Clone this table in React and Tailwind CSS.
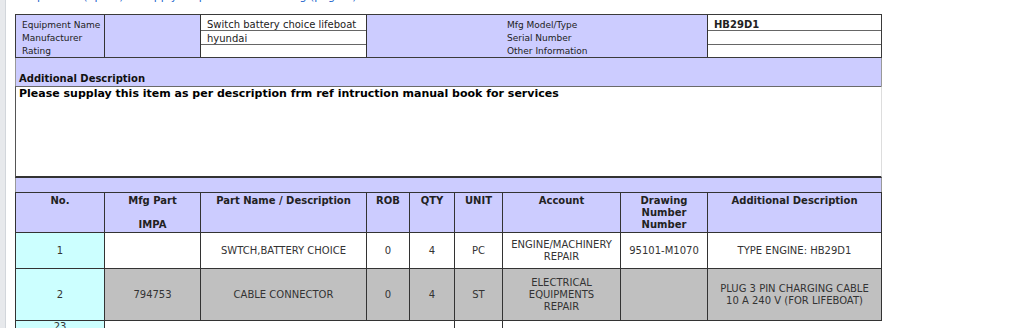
import React from 'react';

const LAV = 'bg-[#ccccff]';

const ITEMS = [
  {
    no: '1',
    impa: '',
    name: 'SWTCH,BATTERY CHOICE',
    rob: '0',
    qty: '4',
    unit: 'PC',
    account: ['ENGINE/MACHINERY', 'REPAIR'],
    drawing: '95101-M1070',
    desc: ['TYPE ENGINE: HB29D1'],
    h: 'h-[36px]',
    bg: 'bg-white',
  },
  {
    no: '2',
    impa: '794753',
    name: 'CABLE CONNECTOR',
    rob: '0',
    qty: '4',
    unit: 'ST',
    account: ['ELECTRICAL', 'EQUIPMENTS', 'REPAIR'],
    drawing: '',
    desc: ['PLUG 3 PIN CHARGING CABLE', '10 A 240 V (FOR LIFEBOAT)'],
    h: 'h-[52px]',
    bg: 'bg-[#c0c0c0]',
  },
];

const Lines = ({ lines }) =>
  lines.map((l, i) => (
    <React.Fragment key={i}>
      {i > 0 && <br />}
      {l}
    </React.Fragment>
  ));

const Cell = ({ children, className = '' }) => (
  <div className={`flex items-center justify-center border-r border-b border-[#333] text-center ${className}`}>
    <div>{children}</div>
  </div>
);

const HeadCell = ({ children, last }) => (
  <div className={`h-[40px] border-b border-[#333] ${last ? '' : 'border-r'} ${LAV} pt-[2px] text-center font-bold`}>
    {children}
  </div>
);

export default function App() {
  return (
    <div className="flex h-[328px] w-[1024px] overflow-hidden bg-white font-['DejaVu_Sans',sans-serif] text-[#222]">
      {/* left gutter */}
      <div className="w-[6px] shrink-0 border-r border-[#d2d6db] bg-[#e7e9ec]" />

      <div className="ml-[9px] w-[867px] shrink-0">
        {/* breadcrumb, scrolled mostly out of view */}
        <div className="flex h-[14px] items-start">
          <div className="-mt-[9px] whitespace-nowrap pl-[4px] text-[11px] leading-[12px] text-[#2266cc]">
            Requisition (Spare) &gt; Supply Request &gt; Item Listing (page 1)
          </div>
        </div>

        {/* equipment info */}
        <div className="flex h-[44px] border border-[#3a3a3a]">
          <div className={`w-[89px] border-r border-[#333] ${LAV} pl-[6px] pt-[4px] text-[9px] leading-[13px]`}>
            <div>Equipment Name</div>
            <div>Manufacturer</div>
            <div>Rating</div>
          </div>
          <div className={`w-[95px] ${LAV}`} />
          <div className="flex w-[167px] flex-col border-x border-[#333] text-[10px] leading-none">
            <div className="flex h-[16px] items-end border-b border-[#666] pl-[6px]">Switch battery choice lifeboat</div>
            <div className="flex h-[14px] items-end border-b border-[#666] pl-[6px]">hyundai</div>
            <div className="h-[12px]" />
          </div>
          <div className={`w-[340px] ${LAV} pl-[140px] pt-[4px] text-[9px] leading-[13px]`}>
            <div>Mfg Model/Type</div>
            <div>Serial Number</div>
            <div>Other Information</div>
          </div>
          <div className="flex w-[174px] flex-col border-l border-[#333] text-[10px] leading-none">
            <div className="flex h-[16px] items-end border-b border-[#666] pl-[6px] font-bold">HB29D1</div>
            <div className="h-[14px] border-b border-[#666]" />
            <div className="h-[12px]" />
          </div>
        </div>

        {/* additional description */}
        <div className={`flex h-[28px] items-end border-x border-[#999] ${LAV} pb-[2px] pl-[3px] text-[10px] font-bold leading-none text-[#111]`}>
          Additional Description
        </div>
        <div className="h-[92px] border-t border-b-2 border-l border-r border-t-[#6a6a6a] border-b-[#333] border-l-[#555] border-r-[#ddd] bg-white pl-[3px] text-[11px] font-bold leading-[13px] text-black">
          Please supplay this item as per description frm ref intruction manual book for services
        </div>
        <div className={`h-[14px] border-x border-[#999] ${LAV}`} />

        {/* items */}
        <div className="grid grid-cols-[89px_96px_166px_43px_45px_48px_118px_87px_174px] border-l border-t border-[#333] text-[10px] leading-[12px]">
          <HeadCell>No.</HeadCell>
          <HeadCell>
            Mfg Part
            <br />
            <br />
            IMPA
          </HeadCell>
          <HeadCell>Part Name / Description</HeadCell>
          <HeadCell>ROB</HeadCell>
          <HeadCell>QTY</HeadCell>
          <HeadCell>UNIT</HeadCell>
          <HeadCell>Account</HeadCell>
          <HeadCell>
            Drawing
            <br />
            Number
            <br />
            Number
          </HeadCell>
          <HeadCell>Additional Description</HeadCell>

          {ITEMS.map((it) => (
            <React.Fragment key={it.no}>
              <Cell className={`${it.h} bg-[#ccffff] text-[#333]`}>{it.no}</Cell>
              <Cell className={`${it.bg} text-[#333]`}>{it.impa}</Cell>
              <Cell className={`${it.bg} text-[#333]`}>{it.name}</Cell>
              <Cell className={`${it.bg} text-[#333]`}>{it.rob}</Cell>
              <Cell className={`${it.bg} text-[#333]`}>{it.qty}</Cell>
              <Cell className={`${it.bg} text-[#333]`}>{it.unit}</Cell>
              <Cell className={`${it.bg} text-[#333]`}>
                <Lines lines={it.account} />
              </Cell>
              <Cell className={`${it.bg} text-[#333]`}>{it.drawing}</Cell>
              <Cell className={`${it.bg} text-[#333]`}>
                <Lines lines={it.desc} />
              </Cell>
            </React.Fragment>
          ))}

          <div className="h-[20px] border-r border-[#333] bg-[#ccffff] text-center text-[#333]">23</div>
          <div className="col-span-4 border-r border-[#333]" />
          <div className="border-r border-[#333]" />
          <div className="col-span-3" />
        </div>
      </div>
    </div>
  );
}
